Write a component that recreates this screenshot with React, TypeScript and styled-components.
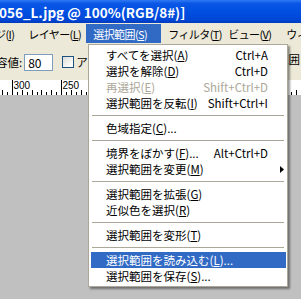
import React from "react";
import styled, { createGlobalStyle } from "styled-components";

const Global = createGlobalStyle`
  html, body { margin: 0; padding: 0; background: #c0c0c0; }
  body { font-family: "Noto Sans CJK JP", "Noto Sans", sans-serif; }
`;

const UI = `"Noto Sans CJK JP", "Noto Sans", sans-serif`;

const Window = styled.div`
  position: relative;
  width: 301px;
  height: 299px;
  overflow: hidden;
  display: flex;
  flex-direction: column;
  background: #c0c0c0;
`;

const TitleBar = styled.div`
  flex: none;
  height: 23px;
  display: flex;
  align-items: center;
  background: linear-gradient(180deg, #2f78f2 0%, #0a57e6 15%, #004ee0 55%, #0047d6 85%, #003bbd 100%);
  color: #fff;
  font: bold 13.5px ${UI};
  white-space: nowrap;
  overflow: hidden;
`;

const TitleText = styled.span`
  margin-left: -1px;
`;

const MenuBar = styled.div`
  flex: none;
  height: 21px;
  padding-top: 1px;
  padding-bottom: 1px;
  box-sizing: border-box;
  display: flex;
  background: #ece9d8;
  font: 11px ${UI};
  letter-spacing: -0.6px;
  white-space: nowrap;
  overflow: hidden;
`;

const MenuBarItem = styled.div<{ $active?: boolean; $w?: number; $shift?: number }>`
  flex: none;
  display: flex;
  align-items: center;
  box-sizing: border-box;
  padding-left: 7px;
  padding-right: 7px;
  width: ${(p) => (p.$w ? `${p.$w}px` : "auto")};
  margin-left: ${(p) => p.$shift ?? 0}px;
  background: ${(p) => (p.$active ? "#316ac5" : "transparent")};
  color: ${(p) => (p.$active ? "#fff" : "#000")};
`;

const U = styled.span`
  text-decoration: underline;
  text-underline-offset: 1px;
`;

const Toolbar = styled.div`
  flex: none;
  height: 36px;
  display: flex;
  align-items: center;
  background: #ece9d8;
  font: 11.5px ${UI};
  white-space: nowrap;
  overflow: hidden;
`;

const Label = styled.span<{ $shift?: number }>`
  margin-left: ${(p) => p.$shift ?? 0}px;
`;

const NumberBox = styled.div`
  flex: none;
  width: 29px;
  height: 17px;
  box-sizing: border-box;
  margin-left: 2px;
  border: 1px solid #7f9db9;
  background: #fff;
  display: flex;
  align-items: center;
  padding-left: 3px;
  font: 12px ${UI};
`;

const CheckBox = styled.div`
  flex: none;
  width: 12px;
  height: 12px;
  box-sizing: border-box;
  margin: 0 2px 0 9px;
  border: 1px solid #1c5180;
  background: linear-gradient(135deg, #dcdcd7 0%, #f4f4f0 60%, #ffffff 100%);
`;

const Spacer = styled.div`
  flex: 1;
`;

const SideLabel = styled.span`
  margin-right: 1px;
  margin-top: -6px;
`;

const RulerBar = styled.div`
  flex: none;
  height: 15px;
  background: #fff;
  svg { display: block; }
`;

const Canvas = styled.div`
  flex: 1;
  background: #c0c0c0;
`;

const Dropdown = styled.div`
  position: absolute;
  left: 88px;
  top: 44px;
  width: 200px;
  box-sizing: border-box;
  padding: 2px 1px 2px 2px;
  background: #fff;
  border: 1px solid #aca899;
  box-shadow: 2px 2px 2px rgba(0, 0, 0, 0.42);
  font: 11.5px ${UI};
  white-space: nowrap;
`;

const Row = styled.div<{ $active?: boolean; $disabled?: boolean }>`
  height: 16px;
  display: grid;
  grid-template-columns: 1fr auto 18px;
  align-items: center;
  padding-left: 15px;
  background: ${(p) => (p.$active ? "#316ac5" : "transparent")};
  color: ${(p) => (p.$active ? "#fff" : p.$disabled ? "#aca899" : "#000")};
`;

const Shortcut = styled.span`
  text-align: right;
`;

const Arrow = styled.span`
  display: flex;
  padding-left: 12px;
`;

const Separator = styled.div`
  height: 9px;
  display: flex;
  align-items: center;
  padding: 0 2px 0 1px;
  &::after {
    content: "";
    flex: 1;
    height: 1px;
    background: #aca899;
  }
`;

type Item =
  | "sep"
  | {
      label: string;
      key: string;
      suffix?: string;
      shortcut?: string;
      disabled?: boolean;
      active?: boolean;
      submenu?: boolean;
    };

const items: Item[] = [
  { label: "すべてを選択", key: "A", shortcut: "Ctrl+A" },
  { label: "選択を解除", key: "D", shortcut: "Ctrl+D" },
  { label: "再選択", key: "E", shortcut: "Shift+Ctrl+D", disabled: true },
  { label: "選択範囲を反転", key: "I", shortcut: "Shift+Ctrl+I" },
  "sep",
  { label: "色域指定", key: "C", suffix: "..." },
  "sep",
  { label: "境界をぼかす", key: "F", suffix: "...", shortcut: "Alt+Ctrl+D" },
  { label: "選択範囲を変更", key: "M", submenu: true },
  "sep",
  { label: "選択範囲を拡張", key: "G" },
  { label: "近似色を選択", key: "R" },
  "sep",
  { label: "選択範囲を変形", key: "T" },
  "sep",
  { label: "選択範囲を読み込む", key: "L", suffix: "...", active: true },
  { label: "選択範囲を保存", key: "S", suffix: "..." },
];

const menus = [
  { label: "ジ", key: "I", shift: -12 },
  { label: "レイヤー", key: "L", w: 65 },
  { label: "選択範囲", key: "S", w: 75, active: true },
  { label: "フィルタ", key: "T", w: 60 },
  { label: "ビュー", key: "V", w: 58 },
  { label: "ウィンドウ", key: "W" },
];

const Ruler: React.FC = () => {
  const ticks: React.ReactNode[] = [];
  const labels: React.ReactNode[] = [];
  for (let v = 315; v >= -20; v -= 5) {
    const x = Math.round(12 + (300 - v) * 0.98) + 0.5;
    let h = 3;
    if (v % 50 === 0) h = 15;
    else if (v % 10 === 0) h = 5;
    ticks.push(<line key={v} x1={x} x2={x} y1={15 - h} y2={15} stroke="#000" strokeWidth={1} />);
    if (v % 50 === 0) {
      labels.push(
        <text key={"t" + v} x={x + 1} y={8.5} fontSize={10} fontFamily="Liberation Sans, Arial, sans-serif" fill="#000">
          {v}
        </text>
      );
    }
  }
  return (
    <svg width={301} height={15} viewBox="0 0 301 15">
      {ticks}
      {labels}
    </svg>
  );
};

export default function App() {
  return (
    <>
      <Global />
      <Window>
        <TitleBar>
          <TitleText>056_L.jpg @ 100%(RGB/8#)]</TitleText>
        </TitleBar>
        <MenuBar>
          {menus.map((m) => (
            <MenuBarItem key={m.key} $w={m.w} $shift={m.shift} $active={m.active}>
              {m.label}(<U>{m.key}</U>)
            </MenuBarItem>
          ))}
        </MenuBar>
        <Toolbar>
          <Label $shift={-4}>容値:</Label>
          <NumberBox>80</NumberBox>
          <CheckBox />
          <Label>アンチエイリアス</Label>
          <Spacer />
          <SideLabel>選択範囲</SideLabel>
        </Toolbar>
        <RulerBar>
          <Ruler />
        </RulerBar>
        <Canvas />
        <Dropdown>
          {items.map((it, i) =>
            it === "sep" ? (
              <Separator key={i} />
            ) : (
              <Row key={i} $active={it.active} $disabled={it.disabled}>
                <span>
                  {it.label}(<U>{it.key}</U>){it.suffix ?? ""}
                </span>
                <Shortcut>{it.shortcut ?? ""}</Shortcut>
                <Arrow>
                  {it.submenu ? (
                    <svg width="4" height="7" viewBox="0 0 4 7">
                      <path d="M0 0 L4 3.5 L0 7 Z" fill="#000" />
                    </svg>
                  ) : null}
                </Arrow>
              </Row>
            )
          )}
        </Dropdown>
      </Window>
    </>
  );
}
